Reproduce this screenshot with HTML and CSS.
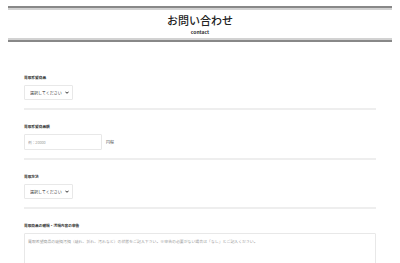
FILE: index.html
```html
<!DOCTYPE html>
<html lang="ja">
<head>
    <meta charset="UTF-8">
    <meta name="viewport" content="width=device-width, initial-scale=1.0">
    <title>お問い合わせ</title>
    <link rel="stylesheet" href="styles.css">
</head>
<body>

    <header class="page-head">
        <h1>お問い合わせ</h1>
        <p class="sub">contact</p>
    </header>

    <form class="contact-form">
        <div class="field">
            <label>買取希望商品</label>
            <div class="select-wrap">
                <select>
                    <option>選択してください</option>
                </select>
                <svg class="chev" viewBox="0 0 10 7"><path d="M1 1.5 L5 5.5 L9 1.5" /></svg>
            </div>
        </div>

        <div class="field">
            <label>買取希望商品額</label>
            <div class="price-row">
                <input type="text" placeholder="例：20000">
                <span class="unit">円程</span>
            </div>
        </div>

        <div class="field">
            <label>買取方法</label>
            <div class="select-wrap">
                <select>
                    <option>選択してください</option>
                </select>
                <svg class="chev" viewBox="0 0 10 7"><path d="M1 1.5 L5 5.5 L9 1.5" /></svg>
            </div>
        </div>

        <div class="field last">
            <label>買取商品の破損・汚損内容の申告</label>
            <textarea placeholder="買取希望商品の破損汚損（破れ、折れ、汚れなど）の状態をご記入下さい。※申告の必要がない場合は「なし」とご記入ください。"></textarea>
        </div>
    </form>

</body>
</html>
```

FILE: styles.css
```css
body {
    font-family: "Noto Sans CJK JP", "Noto Sans", sans-serif;
    margin: 6px 8px;
    padding: 0;
    background-color: #fff;
    color: #333;
}
.page-head {
    border-top: 2px solid #888;
    border-bottom: 2px solid #888;
    box-shadow: inset 0 2px 0 #d2d2d2, inset 0 -2px 0 #d2d2d2;
    padding: 6px 0 5px;
    text-align: center;
}
.page-head h1 {
    margin: 0;
    font-size: 11px;
    line-height: 13px;
    font-weight: 500;
    color: #222;
}
.page-head .sub {
    margin: 2px 0 0;
    font-size: 5px;
    line-height: 6px;
    font-weight: bold;
}
.contact-form {
    padding: 33px 16px 0;
}
.field {
    padding-bottom: 8px;
    border-bottom: 2px solid #eee;
    margin-bottom: 14px;
}
.field.last {
    border-bottom: none;
}
.field label {
    display: block;
    font-size: 3.7px;
    line-height: 5px;
    font-weight: bold;
    margin-bottom: 5px;
}
.select-wrap {
    position: relative;
    width: 49px;
}
.select-wrap select {
    display: block;
    appearance: none;
    width: 49px;
    height: 15px;
    border: 1px solid #e8e8e8;
    border-radius: 1px;
    background: #fff;
    font-family: inherit;
    font-size: 4px;
    color: #333;
    padding: 0 0 0 5px;
    margin: 0;
}
.select-wrap .chev {
    position: absolute;
    right: 4px;
    top: 6px;
    width: 4px;
    height: 3px;
    fill: none;
    stroke: #222;
    stroke-width: 2.4;
}
.price-row {
    display: flex;
    align-items: center;
    gap: 4px;
}
.price-row input {
    display: block;
    width: 78px;
    height: 16px;
    box-sizing: border-box;
    border: 1px solid #e8e8e8;
    border-radius: 1px;
    font-family: inherit;
    font-size: 3.7px;
    padding: 0 3px;
    margin: 0;
}
.unit {
    font-size: 4px;
    color: #555;
}
input::placeholder,
textarea::placeholder {
    color: #999;
}
textarea {
    display: block;
    width: 100%;
    height: 80px;
    box-sizing: border-box;
    border: 1px solid #e8e8e8;
    border-radius: 1px;
    font-family: inherit;
    font-size: 3.9px;
    padding: 4px 3px;
    margin: 0;
    resize: none;
}
```
